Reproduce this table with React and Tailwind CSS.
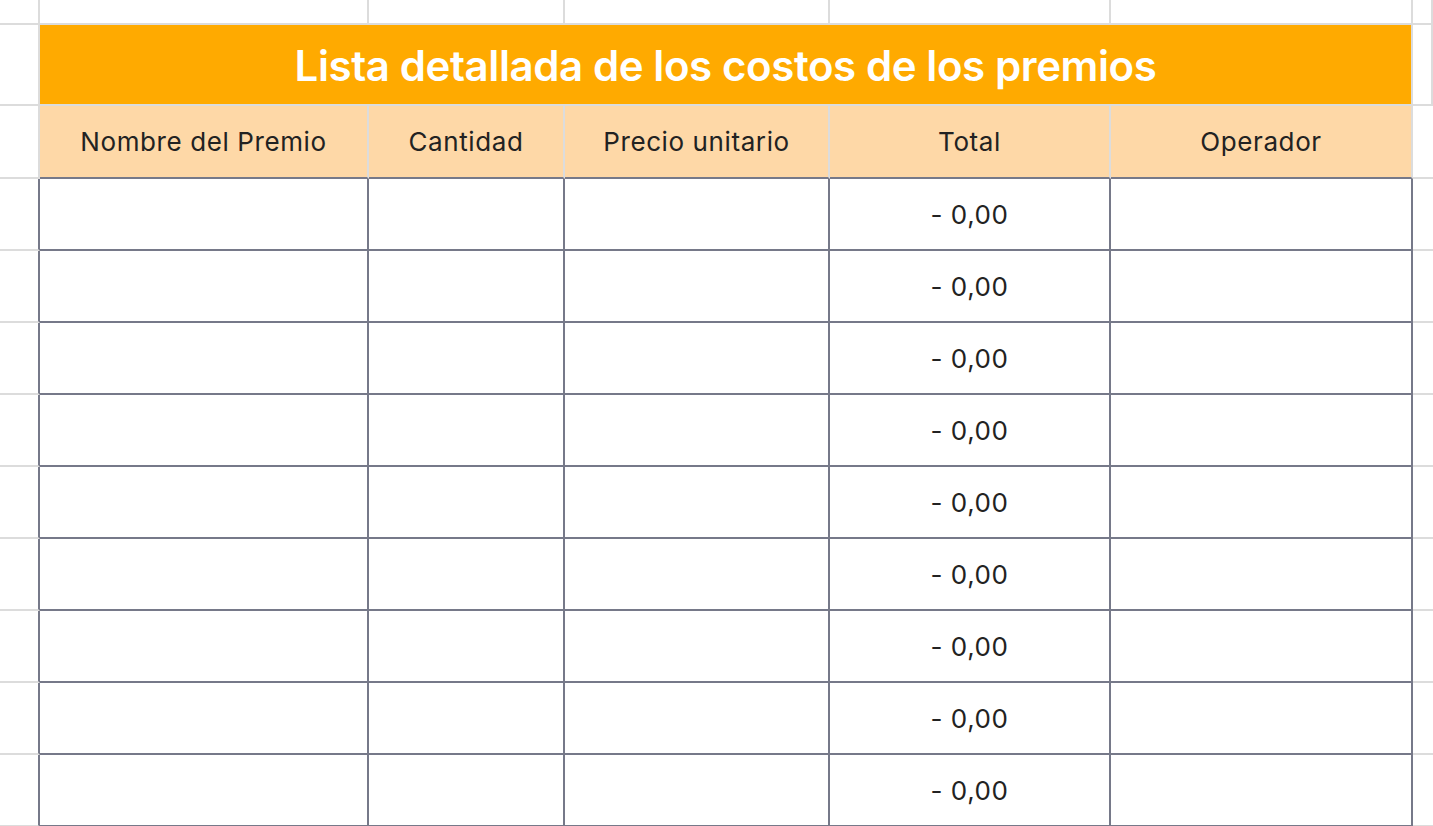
const light = "border-[#dcdcdc]";
const dark = "border-[#767989]";

const headers = ["Nombre del Premio", "Cantidad", "Precio unitario", "Total", "Operador"];
const rows = Array.from({ length: 9 }, (_, i) => i);

function Gutter({ className = "" }) {
  return <div className={`border-r-2 border-b-2 ${light} ${className}`} />;
}

export default function App() {
  return (
    <div
      className="h-[826px] w-[1433px] overflow-hidden bg-white text-[#222222]"
      style={{ fontFamily: "Inter, 'Noto Sans', sans-serif" }}
    >
      <div className="grid grid-cols-[40px_329px_196px_265px_281px_302px_20px] grid-rows-[25px_81px_73px_repeat(9,72px)]">
        {/* top blank row */}
        {Array.from({ length: 7 }, (_, i) => (
          <Gutter key={`t${i}`} />
        ))}

        {/* title row */}
        <Gutter />
        <div className={`col-span-5 flex items-center justify-center border-r-2 border-b-2 ${light} bg-[#ffaa00]`}>
          <h1 className="pt-[2px] text-[42px] font-semibold tracking-[-0.4px] text-white">
            Lista detallada de los costos de los premios
          </h1>
        </div>
        <Gutter />

        {/* header row */}
        <div className="border-r-2 border-b-2 border-r-[#dcdcdc] border-b-[#dcdcdc]" />
        {headers.map((h) => (
          <div
            key={h}
            className="flex items-center justify-center border-r-2 border-b-2 border-r-[#dcdcdc] border-b-[#767989] bg-[#fed8a7] text-[26px] tracking-[0.6px]"
          >
            {h}
          </div>
        ))}
        <div className={`border-b-2 ${light}`} />

        {/* body rows */}
        {rows.map((r) => (
          <div key={r} className="contents">
            <div className="border-r-2 border-b-2 border-r-[#767989] border-b-[#dcdcdc]" />
            <div className={`border-r-2 border-b-2 ${dark}`} />
            <div className={`border-r-2 border-b-2 ${dark}`} />
            <div className={`border-r-2 border-b-2 ${dark}`} />
            <div className={`flex items-center justify-center border-r-2 border-b-2 ${dark} text-[26px] tracking-[0.6px]`}>
              - 0,00
            </div>
            <div className={`border-r-2 border-b-2 ${dark}`} />
            <div className={`border-b-2 ${light}`} />
          </div>
        ))}
      </div>
    </div>
  );
}
